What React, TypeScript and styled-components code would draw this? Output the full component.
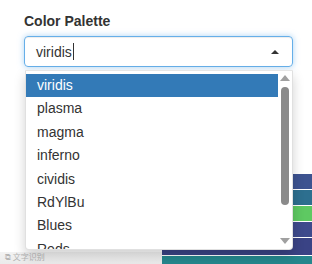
import React from "react";
import styled, { createGlobalStyle } from "styled-components";

const Global = createGlobalStyle`
  html, body { margin: 0; padding: 0; background: #fff; overflow: hidden; }
  body { font-family: "Liberation Sans", Arial, sans-serif; color: #333; }
  #root { width: 312px; height: 264px; overflow: hidden; position: relative; }
`;

const Page = styled.div`
  width: 312px;
  height: 264px;
  position: relative;
  overflow: hidden;
`;

const Form = styled.div`
  padding: 11px 19px 0 24px;
  position: relative;
  z-index: 2;
`;

const Label = styled.div`
  font-size: 14px;
  font-weight: bold;
  line-height: 20px;
  margin-bottom: 5px;
  color: #333;
`;

const Field = styled.div`
  position: relative;
`;

const Input = styled.div`
  box-sizing: border-box;
  height: 31px;
  border: 1px solid #66afe9;
  border-radius: 4px;
  box-shadow: inset 0 1px 1px rgba(0, 0, 0, 0.075), 0 0 6px rgba(102, 175, 233, 0.55);
  display: flex;
  align-items: center;
  padding: 0 13px 0 11px;
  font-size: 14px;
  color: #333;
`;

const Value = styled.span`
  flex: 1;
  display: flex;
  align-items: center;
`;

const Caret = styled.span`
  display: inline-block;
  width: 1px;
  height: 17px;
  background: #333;
  margin-left: 1px;
`;

const Arrow = styled.span<{ $up?: boolean; $color?: string; $w?: number; $h?: number }>`
  width: 0;
  height: 0;
  border-left: ${(p) => p.$w ?? 5}px solid transparent;
  border-right: ${(p) => p.$w ?? 5}px solid transparent;
  ${(p) =>
    p.$up
      ? `border-bottom: ${p.$h ?? p.$w ?? 5}px solid ${p.$color ?? "#333"};`
      : `border-top: ${p.$h ?? p.$w ?? 5}px solid ${p.$color ?? "#333"};`}
`;

const Menu = styled.div`
  position: absolute;
  top: 34px;
  left: 1px;
  right: 0;
  height: 180px;
  box-sizing: border-box;
  background: #fff;
  border: 1px solid rgba(0, 0, 0, 0.12);
  border-top-color: #e6e6e6;
  border-radius: 0 0 4px 4px;
  box-shadow: 0 6px 12px rgba(0, 0, 0, 0.18);
  display: flex;
  overflow: hidden;
`;

const List = styled.div`
  flex: 1;
  padding-top: 3px;
  overflow: hidden;
`;

const Item = styled.div<{ $active?: boolean }>`
  height: 23.4px;
  line-height: 23.4px;
  padding-left: 11px;
  font-size: 14px;
  color: ${(p) => (p.$active ? "#fff" : "#333")};
  background: ${(p) => (p.$active ? "#337ab7" : "transparent")};
`;

const Scrollbar = styled.div`
  width: 14px;
  display: flex;
  flex-direction: column;
  align-items: center;
  padding: 4px 0 5px;
  box-sizing: border-box;
`;

const Thumb = styled.div`
  width: 8px;
  height: 118px;
  margin: 6px 0 auto;
  background: #8a8a8a;
  border-radius: 4px;
`;

const Chart = styled.div`
  position: absolute;
  top: 174px;
  left: 0;
  right: 0;
  bottom: 0;
  display: grid;
  grid-template-columns: 162px 1fr;
  z-index: 1;
`;

const Side = styled.div`
  position: relative;
  display: flex;
  flex-direction: column;
  justify-content: flex-end;
`;

const Band = styled.div`
  height: 14px;
  background: linear-gradient(to bottom, #f3f3f3, #e9e9e9);
  display: flex;
  align-items: flex-start;
  padding-left: 5px;
  gap: 2px;
`;

const Watermark = styled.span`
  font-family: "Noto Sans CJK SC", sans-serif;
  font-size: 8px;
  line-height: 10px;
  color: #b5b5b5;
`;

const Axis = styled.span`
  position: absolute;
  left: 77px;
  bottom: -4px;
  font-size: 7px;
  color: #666;
`;

const Bars = styled.div`
  display: flex;
  flex-direction: column;
  gap: 1px;
`;

const Bar = styled.div<{ $c: string; $h: number }>`
  height: ${(p) => p.$h}px;
  background: ${(p) => p.$c};
`;

const items = ["viridis", "plasma", "magma", "inferno", "cividis", "RdYlBu", "Blues", "Reds"];
const bars: [string, number][] = [
  ["#3d5390", 15],
  ["#2d6f8f", 15],
  ["#5ec962", 15],
  ["#3e4a8c", 15],
  ["#3a4385", 17],
  ["#25878d", 10],
];

export default function App() {
  return (
    <Page>
      <Global />
      <Chart>
        <Side>
          <Band>
            <Watermark>⧉ 文字识别</Watermark>
          </Band>
          <Axis>Viewport</Axis>
        </Side>
        <Bars>
          {bars.map(([c, h], i) => (
            <Bar key={i} $c={c} $h={h} />
          ))}
        </Bars>
      </Chart>
      <Form>
        <Label>Color Palette</Label>
        <Field>
          <Input>
            <Value>
              viridis
              <Caret />
            </Value>
            <Arrow $up $w={4} />
          </Input>
          <Menu>
            <List>
              {items.map((it, i) => (
                <Item key={it} $active={i === 0}>
                  {it}
                </Item>
              ))}
            </List>
            <Scrollbar>
              <Arrow $up $w={5} $h={6} $color="#a0a0a0" />
              <Thumb />
              <Arrow $w={5} $h={6} $color="#a0a0a0" />
            </Scrollbar>
          </Menu>
        </Field>
      </Form>
    </Page>
  );
}
